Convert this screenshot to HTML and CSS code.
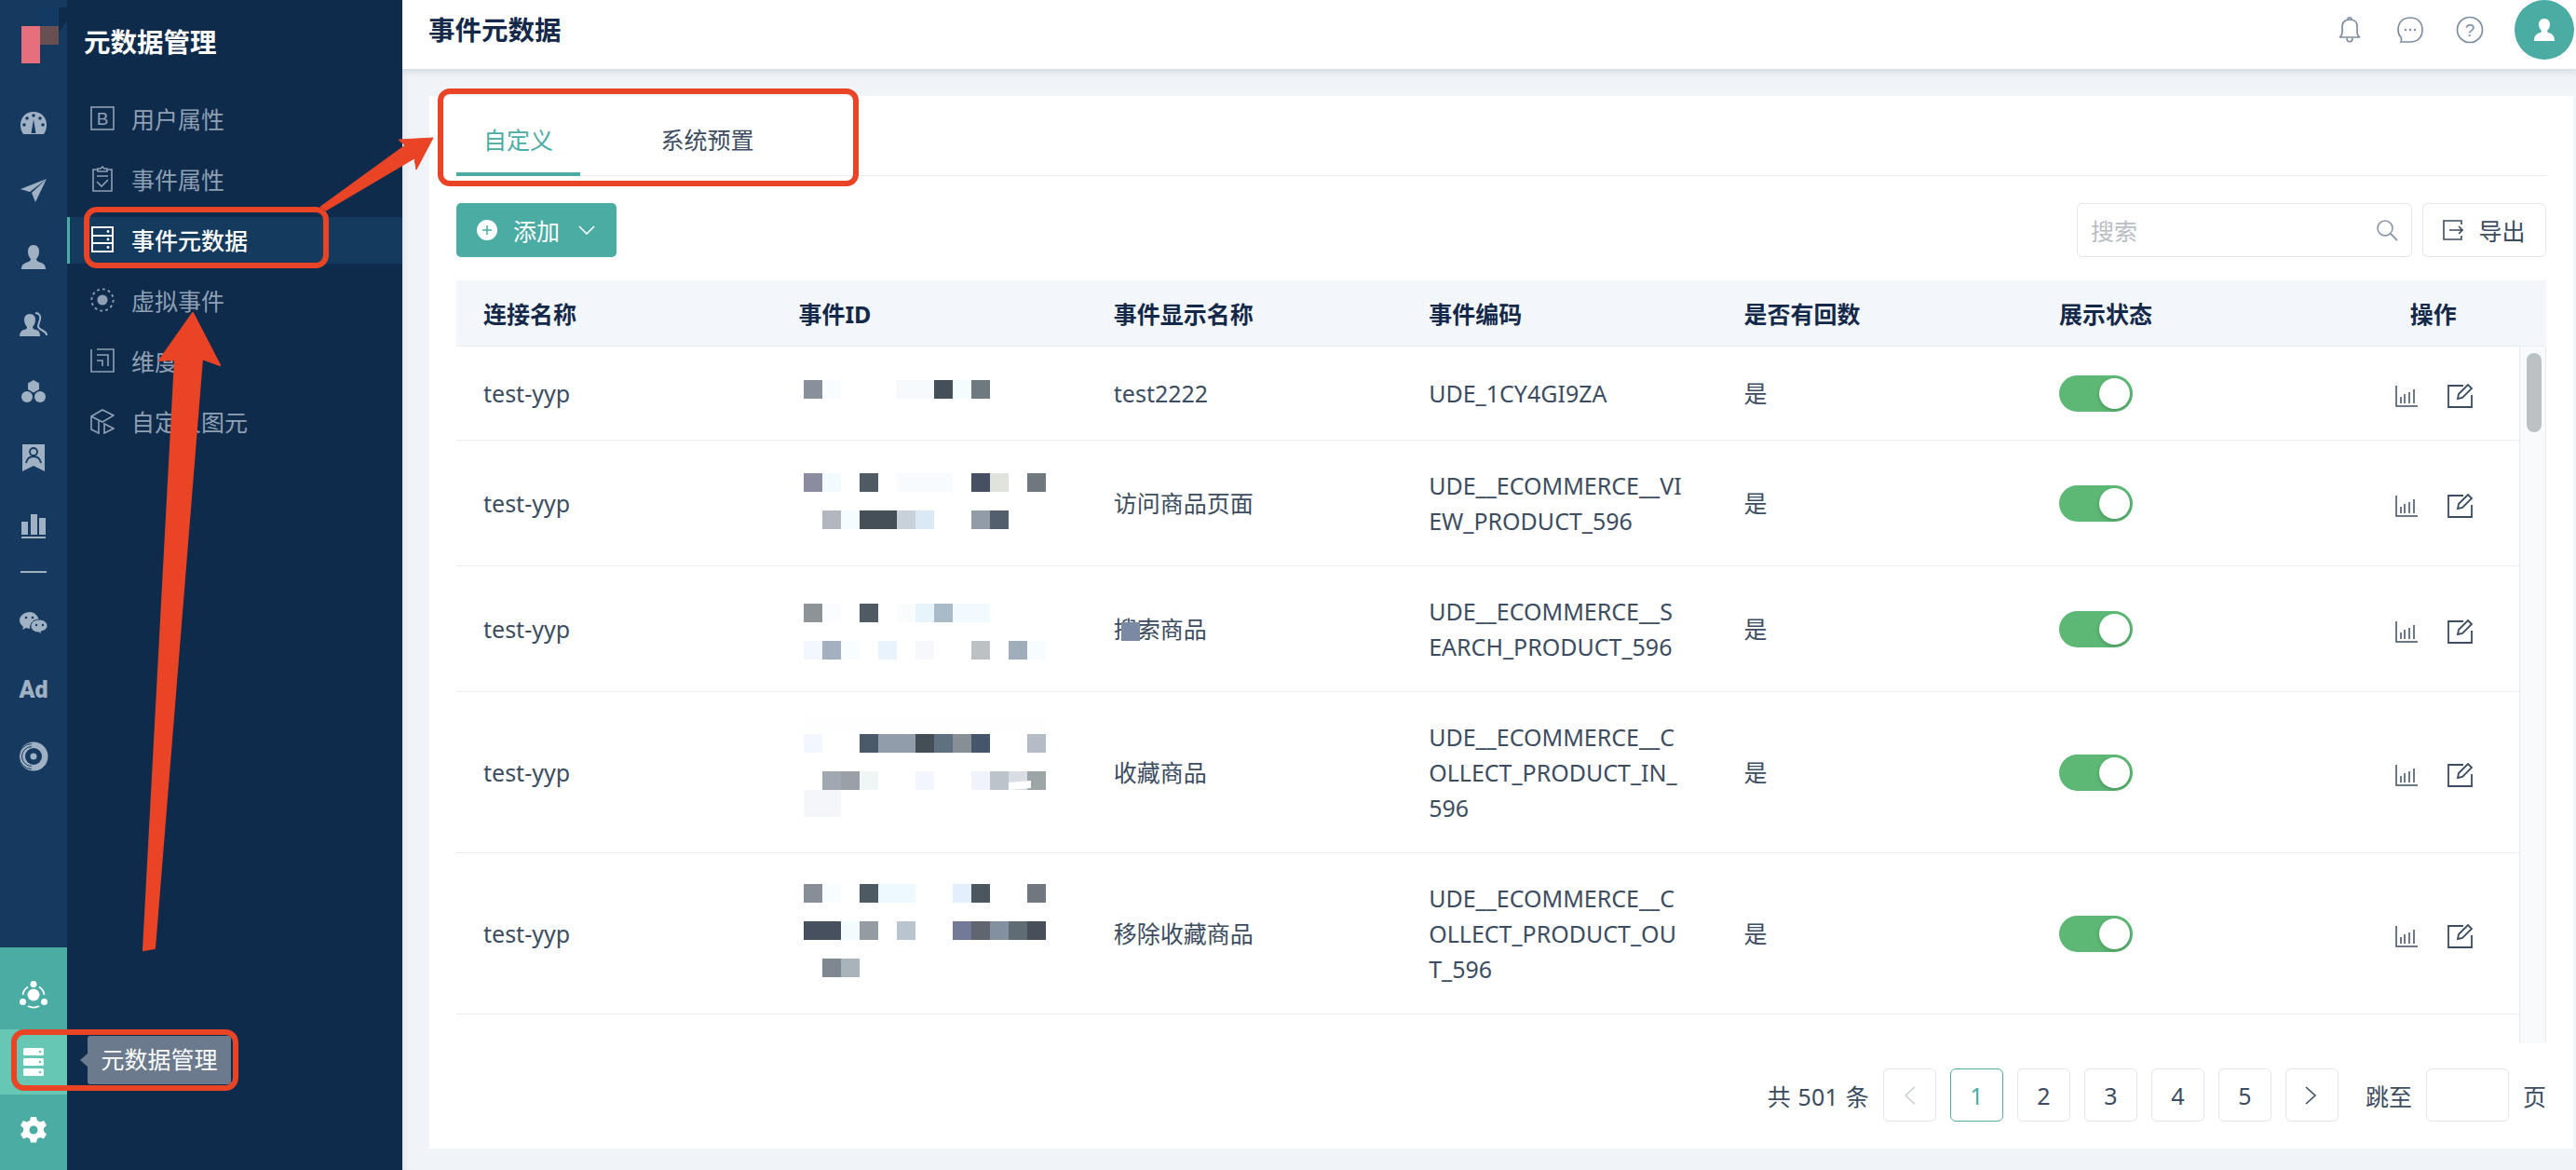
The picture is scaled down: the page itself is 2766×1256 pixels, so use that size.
FILE: index.html
```html
<!DOCTYPE html>
<html lang="zh-CN">
<head>
	<meta charset="UTF-8">
	<title>事件元数据</title>
	<link rel="stylesheet" href="styles.css">
</head>
<body>
<div class="app">
	<!-- icon rail -->
	<div class="rail">
		<div class="logo">
			<svg width="72" height="96" viewBox="0 0 72 96">
				<rect x="43" y="8" width="20" height="20" fill="#123a62"/>
				<path d="M63 8h9v14l-9 13z" fill="#0f2b4c"/>
				<rect x="43" y="28" width="20" height="20" fill="#674f52"/>
				<rect x="23" y="28" width="20" height="40" fill="#e66f7d"/>
			</svg>
		</div>
		<div class="rail-item"><svg width="30" height="26" viewBox="0 0 30 26"><path d="M15 1C7 1 1 7 1 15c0 4 1 7 3 10h22c2-3 3-6 3-10 0-8-6-14-14-14z" fill="#a0b1c3"/><path d="M15 9l2.500 15h-5z" fill="#163a5f"/><g fill="#163a5f"><circle cx="15" cy="5" r="1.800"/><circle cx="8" cy="8" r="1.800"/><circle cx="22" cy="8" r="1.800"/><circle cx="5" cy="15" r="1.800"/><circle cx="25" cy="15" r="1.800"/></g></svg></div>
		<div class="rail-item"><svg width="30" height="27" viewBox="0 0 30 27"><path d="M29 1L1 12l10 3z" fill="#a0b1c3"/><path d="M29 1L13 16l4 10z" fill="#a0b1c3"/></svg></div>
		<div class="rail-item"><svg width="28" height="28" viewBox="0 0 28 28"><path d="M14 1c4 0 6 3 6 7 0 3-1 6-3 8 0 2 2 3 5 4 3 1 5 3 5 7H1c0-4 2-6 5-7 3-1 5-2 5-4-2-2-3-5-3-8 0-4 2-7 6-7z" fill="#a0b1c3"/></svg></div>
		<div class="rail-item"><svg width="30" height="27" viewBox="0 0 30 27"><path d="M11 2c4 0 6 3 6 6 0 3-1 6-3 8 0 2 2 3 4 3 3 1 4 3 4 7H0c0-4 2-6 4-7 3 0 4-1 4-3-2-2-3-5-3-8 0-3 2-6 6-6z" fill="#a0b1c3"/><path d="M17 1c4 0 6 3 5 7-1 3-2 6-2 8 1 2 3 3 5 4 2 1 4 3 4 5" fill="none" stroke="#a0b1c3" stroke-width="2"/></svg></div>
		<div class="rail-item"><svg width="28" height="26" viewBox="0 0 28 26"><g fill="#a0b1c3"><path d="M14 1l6 3.500v6.500l-6 3.500-6-3.500V4.500z"/><circle cx="7" cy="19" r="6"/><circle cx="21" cy="19" r="6"/></g></svg></div>
		<div class="rail-item"><svg width="26" height="30" viewBox="0 0 26 30"><path d="M1 0h24v29l-12-6-12 6z" fill="#a0b1c3"/><circle cx="13" cy="8" r="4" fill="none" stroke="#163a5f" stroke-width="1.800"/><path d="M5 20c1-5 4-7 8-7s7 2 8 7" fill="none" stroke="#163a5f" stroke-width="1.800"/></svg></div>
		<div class="rail-item"><svg width="28" height="27" viewBox="0 0 28 27"><g fill="#a0b1c3"><rect x="1" y="9" width="7" height="14"/><rect x="11" y="1" width="7" height="22"/><rect x="20" y="5" width="7" height="18"/><rect x="1" y="25" width="26" height="2"/></g></svg></div>
		<div class="rail-sep"></div>
		<div class="rail-item"><svg width="30" height="25" viewBox="0 0 30 25"><path d="M11 1C5 1 0 5 0 10c0 3 2 5 4 7l-1 3 4-2c1 0 3 1 4 1 0-5 4-9 9-9h1c-1-5-5-9-10-9z" fill="#a0b1c3"/><path d="M21 9c-5 0-9 3-9 7s4 7 9 7l3 2-1-3c4-1 7-3 7-6 0-4-4-7-9-7z" fill="#a0b1c3" stroke="#163a5f" stroke-width="1"/><g fill="#163a5f"><circle cx="7" cy="7" r="1.300"/><circle cx="14" cy="7" r="1.300"/><circle cx="18" cy="15" r="1.200"/><circle cx="25" cy="15" r="1.200"/></g></svg></div>
		<div class="rail-item rail-ad">Ad</div>
		<div class="rail-item"><svg width="32" height="32" viewBox="0 0 32 32"><circle cx="16" cy="16" r="15.500" fill="#a0b1c3"/><circle cx="16" cy="16" r="9" fill="#163a5f"/><circle cx="16" cy="16" r="3.500" fill="#a0b1c3"/><path d="M14 2.500A13.500 13.500 0 0 0 14 29.500M14 5.500A10.500 10.500 0 0 0 14 26.500" fill="none" stroke="#163a5f" stroke-width="1"/></svg></div>
		<div class="rail-bottom">
			<div class="rail-teal rail-net"><svg width="30" height="30" viewBox="0 0 30 30"><g fill="#fff"><circle cx="15" cy="15" r="6.500"/><circle cx="15" cy="3.500" r="3.500"/><circle cx="3.500" cy="22.500" r="3.500"/><circle cx="26.500" cy="22.500" r="3.500"/></g><g fill="none" stroke="#fff" stroke-width="1.800"><path d="M9 6.500A11.500 11.500 0 0 0 3.500 15M21 6.500A11.500 11.500 0 0 1 26.500 15M9 27a13 13 0 0 0 12 0"/></g></svg></div>
			<div class="rail-teal rail-db"><svg width="24" height="30" viewBox="0 0 24 30"><g fill="#fff"><rect x="1" y="0" width="22" height="8" rx="1.500"/><rect x="1" y="11" width="22" height="8" rx="1.500"/><rect x="1" y="22" width="22" height="8" rx="1.500"/></g><g fill="#66c8b4"><circle cx="19" cy="4" r="1.300"/><circle cx="19" cy="15" r="1.300"/><circle cx="19" cy="26" r="1.300"/></g></svg></div>
			<div class="rail-teal rail-gear"><svg width="30" height="30" viewBox="0 0 30 30"><path d="M12 1h6l1 4 3 1.500 4-1.500 3 5-3 3v3.500l3 3-3 5-4-1.500-3 1.500-1 4h-6l-1-4-3-1.500-4 1.500-3-5 3-3V13l-3-3 3-5 4 1.500 3-1.500z" fill="#fff"/><circle cx="15" cy="15" r="4.500" fill="#4aaca3"/></svg></div>
		</div>
	</div>

	<!-- second level menu -->
	<div class="side">
		<div class="side-title">元数据管理</div>
		<div class="menu">
			<div class="menu-item"><svg width="26" height="26" viewBox="0 0 26 26"><rect x="1" y="1" width="24" height="24" fill="none" stroke="currentColor" stroke-width="1.600"/><text x="13" y="20" font-size="19" text-anchor="middle" fill="currentColor" font-family="Liberation Sans">B</text></svg>用户属性</div>
			<div class="menu-item"><svg width="26" height="28" viewBox="0 0 26 28"><g fill="none" stroke="currentColor" stroke-width="1.600"><path d="M8 4H3v23h20V4h-5"/><path d="M8 6V3h3l2-2 2 2h3v3z"/><path d="M7 11h12M7 17l5 5 7-7"/></g></svg>事件属性</div>
			<div class="menu-item active"><svg width="26" height="28" viewBox="0 0 26 28"><g fill="none" stroke="currentColor" stroke-width="2"><rect x="2" y="1" width="22" height="26"/><path d="M2 10h22M2 18h22"/></g><g fill="currentColor"><circle cx="19" cy="5.500" r="1.400"/><circle cx="19" cy="14" r="1.400"/><circle cx="19" cy="22.500" r="1.400"/></g></svg>事件元数据</div>
			<div class="menu-item"><svg width="28" height="28" viewBox="0 0 28 28"><circle cx="14" cy="14" r="6" fill="currentColor"/><circle cx="14" cy="14" r="12.500" fill="none" stroke="currentColor" stroke-width="2" stroke-dasharray="3 3.500"/></svg>虚拟事件</div>
			<div class="menu-item"><svg width="26" height="26" viewBox="0 0 26 26"><g fill="none" stroke="currentColor" stroke-width="1.600"><path d="M1 1v24h24V1H7"/><path d="M7 7h12v12M7 13h6v6"/></g></svg>维度</div>
			<div class="menu-item"><svg width="26" height="28" viewBox="0 0 26 28"><g fill="none" stroke="currentColor" stroke-width="1.600"><path d="M1 9l12-7 12 6-12 7zM1 9v14l8 4V14M15 17l10 5-10 5z"/></g></svg>自定义图元</div>
		</div>
	</div>

	<div class="main">
		<div class="topbar">
			<div class="page-title">事件元数据</div>
			<div class="top-icons">
				<svg width="24" height="30" viewBox="0 0 24 30"><g fill="none" stroke="#7f8da0" stroke-width="1.700"><path d="M1 23c2-1 3-3 3-6v-6c0-4 3-7 8-7s8 3 8 7v6c0 3 1 5 3 6z"/><path d="M10 4c0-3 4-3 4 0M9 24c0 5 6 5 6 0"/></g></svg>
				<svg class="ic-chat" width="30" height="30" viewBox="0 0 30 30"><path d="M15 2c8 0 13 5 13 13s-5 13-13 13H5c1-2 1-3 0-5-2-2-3-5-3-8C2 7 7 2 15 2z" fill="none" stroke="#7f8da0" stroke-width="1.700"/><g fill="#7f8da0"><circle cx="10" cy="15" r="1.200"/><circle cx="15" cy="15" r="1.200"/><circle cx="20" cy="15" r="1.200"/></g></svg>
				<svg width="30" height="30" viewBox="0 0 30 30"><circle cx="15" cy="15" r="13.500" fill="none" stroke="#7f8da0" stroke-width="1.700"/><text x="15" y="22" font-size="19" text-anchor="middle" fill="#7f8da0" font-family="Liberation Sans">?</text></svg>
				<div class="avatar"><svg width="22" height="24" viewBox="0 0 22 24"><path d="M11 0c4 0 6 3 6 6 0 3-1 5-3 7 0 2 2 2 4 3 2 1 4 3 4 8H0c0-5 2-7 4-8 2-1 4-1 4-3-2-2-3-4-3-7 0-3 2-6 6-6z" fill="#fff"/></svg></div>
			</div>
		</div>

		<div class="card">
			<div class="tabs">
				<div class="tab on">自定义</div>
				<div class="tab">系统预置</div>
			</div>

			<div class="toolbar">
				<div class="btn-add">
					<svg width="22" height="22" viewBox="0 0 22 22"><circle cx="11" cy="11" r="11" fill="#fff"/><path d="M11 6v10M6 11h10" stroke="#4aaca3" stroke-width="1.500"/></svg>
					<span>添加</span>
					<svg width="18" height="10" viewBox="0 0 18 10"><path d="M1 1l8 8 8-8" fill="none" stroke="#fff" stroke-width="1.600"/></svg>
				</div>
				<div class="tool-right">
					<div class="search"><span>搜索</span><svg width="24" height="24" viewBox="0 0 24 24"><circle cx="10" cy="10" r="8" fill="none" stroke="#8a97a6" stroke-width="1.600"/><path d="M16 16l7 7" stroke="#8a97a6" stroke-width="1.800"/></svg></div>
					<div class="btn-export"><svg width="22" height="22" viewBox="0 0 22 22"><g fill="none" stroke="#3c4c61" stroke-width="1.600"><path d="M20 5V1H1v20h19v-4"/><path d="M7 11h14M17 7l4 4-4 4"/></g></svg><span>导出</span></div>
				</div>
			</div>

			<div class="table">
				<div class="thead">
					<div>连接名称</div><div>事件ID</div><div>事件显示名称</div><div>事件编码</div><div>是否有回数</div><div>展示状态</div><div class="c-op">操作</div>
				</div>
				<div class="tbody-wrap">
					<div class="tbody">
						<div class="row">
							<div>test-yyp</div>
							<div class="c-id"><svg width="240" height="28" viewBox="0 0 240 28"><rect x="0" y="0" width="20" height="20" fill="#8a8f9c"/><rect x="20" width="20" height="20" fill="#f8fcfe"/><rect x="100" width="40" height="20" fill="#f7fafc"/><rect x="140" width="20" height="20" fill="#454f5b"/><rect x="160" width="20" height="20" fill="#f5fcfe"/><rect x="180" width="20" height="20" fill="#6f7a80"/></svg></div>
							<div>test2222</div>
							<div>UDE_1CY4GI9ZA</div>
							<div>是</div>
							<div><span class="switch"></span></div>
							<div class="c-op"><span class="ops"><svg class="ic-chart" width="24" height="23" viewBox="0 0 24 23"><path d="M1 0v22h23M6 12v7M10 9v10M15 7v12M20 4v15" fill="none" stroke="#3c4c61" stroke-width="1.500"/></svg><svg class="ic-edit" width="28" height="26" viewBox="0 0 28 26"><g fill="none" stroke="#3c4c61" stroke-width="1.800"><path d="M17 2H1v23h25V12"/><path d="M11 16l1-5L22 1l4 4-10 10z"/></g></svg></span></div>
						</div>
						<div class="row">
							<div>test-yyp</div>
							<div class="c-id"><svg width="280" height="65" viewBox="0 0 280 65"><g><rect x="0" width="20" height="20" fill="#8b8c9f"/><rect x="20" width="20" height="20" fill="#f2fbff"/><rect x="60" width="20" height="20" fill="#505a65"/><rect x="100" width="60" height="20" fill="#f8fbfd"/><rect x="180" width="20" height="20" fill="#474f62"/><rect x="200" width="20" height="20" fill="#e0e2dc"/><rect x="240" width="20" height="20" fill="#6f787e"/></g><g transform="translate(0 40)"><rect x="20" width="20" height="20" fill="#b2b7bf"/><rect x="40" width="20" height="20" fill="#f5fcff"/><rect x="60" width="40" height="20" fill="#454f58"/><rect x="100" width="20" height="20" fill="#c8d1d9"/><rect x="120" width="20" height="20" fill="#dbe8f5"/><rect x="180" width="20" height="20" fill="#929ca9"/><rect x="200" width="20" height="20" fill="#535f6c"/></g></svg></div>
							<div>访问商品页面</div>
							<div>UDE__ECOMMERCE__VI<br>EW_PRODUCT_596</div>
							<div>是</div>
							<div><span class="switch"></span></div>
							<div class="c-op"><span class="ops"><svg class="ic-chart" width="24" height="23" viewBox="0 0 24 23"><path d="M1 0v22h23M6 12v7M10 9v10M15 7v12M20 4v15" fill="none" stroke="#3c4c61" stroke-width="1.500"/></svg><svg class="ic-edit" width="28" height="26" viewBox="0 0 28 26"><g fill="none" stroke="#3c4c61" stroke-width="1.800"><path d="M17 2H1v23h25V12"/><path d="M11 16l1-5L22 1l4 4-10 10z"/></g></svg></span></div>
						</div>
						<div class="row">
							<div>test-yyp</div>
							<div class="c-id"><svg width="280" height="65" viewBox="0 -5 280 65"><g><rect x="0" width="20" height="20" fill="#8d9397"/><rect x="20" width="20" height="20" fill="#fafcff"/><rect x="60" width="20" height="20" fill="#505a64"/><rect x="100" width="20" height="20" fill="#f9fbfd"/><rect x="120" width="20" height="20" fill="#e8f4fc"/><rect x="140" width="20" height="20" fill="#a9bac9"/><rect x="160" width="40" height="20" fill="#f1fbff"/></g><g transform="translate(0 40)"><rect x="0" width="20" height="20" fill="#f3f8ff"/><rect x="20" width="20" height="20" fill="#a4afc0"/><rect x="40" width="20" height="20" fill="#f8fdff"/><rect x="80" width="20" height="20" fill="#e9f3fd"/><rect x="120" width="20" height="20" fill="#f6f8fb"/><rect x="180" width="20" height="20" fill="#bcc2c4"/><rect x="220" width="20" height="20" fill="#a0adbb"/><rect x="240" width="20" height="20" fill="#f6fcff"/></g></svg></div>
							<div><span class="blot">搜索商品</span></div>
							<div>UDE__ECOMMERCE__S<br>EARCH_PRODUCT_596</div>
							<div>是</div>
							<div><span class="switch"></span></div>
							<div class="c-op"><span class="ops"><svg class="ic-chart" width="24" height="23" viewBox="0 0 24 23"><path d="M1 0v22h23M6 12v7M10 9v10M15 7v12M20 4v15" fill="none" stroke="#3c4c61" stroke-width="1.500"/></svg><svg class="ic-edit" width="28" height="26" viewBox="0 0 28 26"><g fill="none" stroke="#3c4c61" stroke-width="1.800"><path d="M17 2H1v23h25V12"/><path d="M11 16l1-5L22 1l4 4-10 10z"/></g></svg></span></div>
						</div>
						<div class="row">
							<div>test-yyp</div>
							<div class="c-id"><svg width="280" height="122" viewBox="0 0 280 122"><rect x="0" width="260" height="20" fill="#fdfefd"/><g transform="translate(0 20)"><rect x="0" width="20" height="20" fill="#f2f6fd"/><rect x="60" width="20" height="20" fill="#4b5a6b"/><rect x="80" width="40" height="20" fill="#919daa"/><rect x="120" width="20" height="20" fill="#434e57"/><rect x="140" width="20" height="20" fill="#5f7081"/><rect x="160" width="20" height="20" fill="#868e96"/><rect x="180" width="20" height="20" fill="#45566b"/><rect x="240" width="20" height="20" fill="#b3bcc7"/></g><g transform="translate(0 60)"><rect x="20" width="20" height="20" fill="#a0a8b1"/><rect x="40" width="20" height="20" fill="#9a9fa8"/><rect x="60" width="20" height="20" fill="#f0f5f6"/><rect x="120" width="20" height="20" fill="#f3f6fd"/><rect x="180" width="20" height="20" fill="#f0f3f9"/><rect x="200" width="20" height="20" fill="#bcc4cb"/><rect x="220" width="20" height="20" fill="#d8dde3"/><rect x="240" width="20" height="20" fill="#9ca6a6"/><path d="M220 12l24-2v8l-24 2z" fill="#fff"/></g><rect x="0" y="80" width="40" height="29" fill="#f4f6fa"/></svg></div>
							<div>收藏商品</div>
							<div>UDE__ECOMMERCE__C<br>OLLECT_PRODUCT_IN_<br>596</div>
							<div>是</div>
							<div><span class="switch"></span></div>
							<div class="c-op"><span class="ops"><svg class="ic-chart" width="24" height="23" viewBox="0 0 24 23"><path d="M1 0v22h23M6 12v7M10 9v10M15 7v12M20 4v15" fill="none" stroke="#3c4c61" stroke-width="1.500"/></svg><svg class="ic-edit" width="28" height="26" viewBox="0 0 28 26"><g fill="none" stroke="#3c4c61" stroke-width="1.800"><path d="M17 2H1v23h25V12"/><path d="M11 16l1-5L22 1l4 4-10 10z"/></g></svg></span></div>
						</div>
						<div class="row">
							<div>test-yyp</div>
							<div class="c-id"><svg width="280" height="107" viewBox="0 0 280 107"><g><rect x="0" width="20" height="20" fill="#878e98"/><rect x="20" width="20" height="20" fill="#f6fcff"/><rect x="60" width="20" height="20" fill="#4e5a63"/><rect x="80" width="40" height="20" fill="#eef8ff"/><rect x="160" width="20" height="20" fill="#e3effd"/><rect x="180" width="20" height="20" fill="#4b565f"/><rect x="240" width="20" height="20" fill="#70777e"/></g><g transform="translate(0 40)"><rect x="0" width="40" height="20" fill="#47505e"/><rect x="40" width="20" height="20" fill="#f2fcfe"/><rect x="60" width="20" height="20" fill="#959ba3"/><rect x="100" width="20" height="20" fill="#b9c4d0"/><rect x="160" width="20" height="20" fill="#737a97"/><rect x="180" width="20" height="20" fill="#60656f"/><rect x="200" width="20" height="20" fill="#82909f"/><rect x="220" width="20" height="20" fill="#5f6c74"/><rect x="240" width="20" height="20" fill="#464f5a"/></g><g transform="translate(0 80)"><rect x="20" width="20" height="20" fill="#7f8790"/><rect x="40" width="20" height="20" fill="#a8b3ba"/></g></svg></div>
							<div>移除收藏商品</div>
							<div>UDE__ECOMMERCE__C<br>OLLECT_PRODUCT_OU<br>T_596</div>
							<div>是</div>
							<div><span class="switch"></span></div>
							<div class="c-op"><span class="ops"><svg class="ic-chart" width="24" height="23" viewBox="0 0 24 23"><path d="M1 0v22h23M6 12v7M10 9v10M15 7v12M20 4v15" fill="none" stroke="#3c4c61" stroke-width="1.500"/></svg><svg class="ic-edit" width="28" height="26" viewBox="0 0 28 26"><g fill="none" stroke="#3c4c61" stroke-width="1.800"><path d="M17 2H1v23h25V12"/><path d="M11 16l1-5L22 1l4 4-10 10z"/></g></svg></span></div>
						</div>
					</div>
					<div class="scroll"><div class="thumb"></div></div>
				</div>
			</div>

			<div class="pager">
				<span class="total">共 501 条</span>
				<span class="pg off"><svg width="14" height="20" viewBox="0 0 14 20"><path d="M13 1L3 10l10 9" fill="none" stroke="#c9ced4" stroke-width="1.600"/></svg></span>
				<span class="pg cur">1</span>
				<span class="pg">2</span>
				<span class="pg">3</span>
				<span class="pg">4</span>
				<span class="pg">5</span>
				<span class="pg"><svg width="14" height="20" viewBox="0 0 14 20"><path d="M1 1l10 9-10 9" fill="none" stroke="#3c4c61" stroke-width="1.600"/></svg></span>
				<span class="jump">跳至</span>
				<span class="pg-input"></span>
				<span class="unit">页</span>
			</div>
		</div>
	</div>
</div>

<!-- tooltip -->
<div class="tip">元数据管理</div>

<!-- red marks drawn on top of the screenshot -->
<svg class="marks" width="2766" height="1256" viewBox="0 0 2766 1256">
	<g fill="none" stroke="#e84425" stroke-width="6">
		<rect x="93" y="225" width="257" height="60" rx="11"/>
		<rect x="15" y="1108" width="238" height="60" rx="11"/>
		<rect x="473" y="98" width="446" height="99" rx="10"/>
	</g>
	<g fill="#e84425" stroke="#e84425" stroke-linejoin="round">
		<path d="M207 336L236 392L217 385L166 1018L154 1020L188 386L171 387Z" stroke-width="2"/>
		<path d="M465 148L447 182L445 170L350 226L344 222L435 156L428 150Z" stroke-width="1"/>
	</g>
</svg>
</body>
</html>
```

FILE: styles.css
```css
*{
	margin: 0;
	padding: 0;
	box-sizing: border-box;
}
html, body{
	width: 2766px;
	height: 1256px;
	overflow: hidden;
}
body{
	font-family: "Noto Sans", "Noto Sans CJK SC", sans-serif;
	font-size: 25px;
	color: #3c4c61;
	background-color: #f0f4f8;
	position: relative;
}
svg{
	display: block;
	flex: none;
}
.app{
	display: flex;
	height: 1256px;
}

/* rail */
.rail{
	width: 72px;
	background-color: #163a5f;
	display: flex;
	flex-direction: column;
}
.logo{
	height: 96px;
}
.rail-item{
	height: 72px;
	display: flex;
	align-items: center;
	justify-content: center;
}
.rail-sep{
	height: 2px;
	width: 28px;
	margin: 13px 0 17px 22px;
	background-color: #a0b1c3;
}
.rail-ad{
	color: #a0b1c3;
	font-family: "Roboto", sans-serif;
	font-weight: 900;
	font-size: 25px;
}
.rail-bottom{
	margin-top: auto;
	background-color: #4aaca3;
}
.rail-teal{
	display: flex;
	justify-content: center;
	align-items: center;
}
.rail-net{
	height: 88px;
	padding-top: 13px;
}
.rail-db{
	height: 70px;
	background-color: #66c8b4;
}
.rail-gear{
	height: 81px;
	padding-bottom: 6px;
}

/* second level menu */
.side{
	width: 360px;
	background-color: #0f2b4c;
}
.side-title{
	height: 96px;
	padding: 24px 0 0 18px;
	color: #fff;
	font-size: 28.5px;
	font-weight: 700;
	line-height: 42px;
}
.menu{
	margin-top: 7px;
}
.menu-item{
	height: 50px;
	margin-bottom: 15px;
	display: flex;
	align-items: center;
	gap: 18px;
	padding-left: 25px;
	color: #8fa0b3;
	padding-bottom: 2px;
}
.menu-item svg{
	width: 26px;
}
.menu-item.active{
	background-color: #143a5e;
	border-left: 3px solid #4aaca3;
	padding-left: 22px;
	color: #fff;
	font-weight: 500;
}

/* main */
.main{
	flex: 1;
	display: flex;
	flex-direction: column;
	min-width: 0;
	box-shadow: inset 6px 0 8px -6px rgba(30, 50, 80, 0.12);
}
.topbar{
	height: 74px;
	background-color: #fff;
	box-shadow: 0 2px 8px rgba(40, 60, 90, 0.18);
	display: flex;
	align-items: flex-start;
	justify-content: space-between;
	padding-left: 28px;
	position: relative;
}
.page-title{
	font-size: 28.5px;
	font-weight: 700;
	line-height: 64px;
	color: #14294a;
}
.top-icons{
	display: flex;
	align-items: center;
	height: 64px;
	padding-right: 2px;
	gap: 34px;
}
.ic-chat{
	margin-left: 4px;
}
.avatar{
	width: 64px;
	height: 64px;
	margin-left: -1px;
	border-radius: 50%;
	background-color: #4aaca3;
	display: flex;
	align-items: center;
	justify-content: center;
}

/* card */
.card{
	flex: 1;
	margin: 29px 3px 23px 29px;
	padding: 0 29px;
	background-color: #fff;
	display: flex;
	flex-direction: column;
}
.tabs{
	height: 86px;
	border-bottom: 1px solid #e8edf2;
	display: flex;
}
.tab{
	height: 86px;
	width: 133px;
	display: flex;
	align-items: center;
	justify-content: center;
	padding-top: 6px;
}
.tab + .tab{
	margin-left: 70px;
}
.tab.on{
	color: #4aaca3;
	border-bottom: 4px solid #4aaca3;
	padding-top: 10px;
}
.toolbar{
	margin-top: 29px;
	height: 58px;
	display: flex;
	justify-content: space-between;
}
.btn-add{
	width: 172px;
	background-color: #4aaca3;
	border-radius: 5px;
	color: #fff;
	display: flex;
	align-items: center;
	padding-left: 22px;
	gap: 17px;
}
.btn-add svg:last-child{
	margin-left: 3px;
}
.tool-right{
	display: flex;
	gap: 11px;
}
.search{
	width: 360px;
	border: 1.5px solid #dfe6ec;
	border-radius: 6px;
	display: flex;
	align-items: center;
	justify-content: space-between;
	padding: 0 14px;
	color: #b9bec4;
}
.btn-export{
	width: 133px;
	border: 1.5px solid #dfe6ec;
	border-radius: 6px;
	display: flex;
	align-items: center;
	justify-content: center;
	gap: 16px;
}

/* table */
.table{
	margin-top: 25px;
}
.thead, .row{
	display: grid;
	grid-template-columns: repeat(6, 338.4px) 1fr;
	align-items: center;
}
.thead{
	height: 71px;
	background-color: #f3f7fb;
	border-bottom: 1px solid #e8edf2;
	padding-right: 29px;
	font-weight: 700;
	color: #14294a;
}
.thead > div, .row > div{
	padding-left: 29px;
}
.thead > .c-op, .row > .c-op{
	padding-left: 0;
	text-align: center;
}
.tbody-wrap{
	display: flex;
	height: 748px;
}
.tbody{
	flex: 1;
	min-width: 0;
	overflow: hidden;
}
.row{
	min-height: 101px;
	padding: 29px 0;
	line-height: 38px;
	border-bottom: 1px solid #e9eef3;
}
.row > .c-id{
	height: 38px;
	padding-left: 35px;
	display: flex;
	align-items: center;
}
.blot{
	position: relative;
	display: inline-block;
}
.blot::after{
	content: "";
	position: absolute;
	left: 8px;
	top: 12px;
	width: 20px;
	height: 20px;
	background-color: #7b89a3;
}
.switch{
	display: block;
	width: 79px;
	height: 39px;
	border-radius: 20px;
	background-color: #5cb874;
	position: relative;
}
.switch::after{
	content: "";
	position: absolute;
	right: 3px;
	top: 3px;
	width: 33px;
	height: 33px;
	border-radius: 50%;
	background-color: #fff;
	box-shadow: 0 2px 4px rgba(0, 0, 0, 0.2);
}
.ops{
	display: inline-flex;
	align-items: center;
	gap: 32px;
	margin-left: 3px;
	vertical-align: middle;
}
.scroll{
	width: 29px;
	background-color: #f8fafb;
	border-left: 1px solid #e6ebef;
	border-right: 1px solid #e6ebef;
	padding: 7px 4px 0 7px;
}
.thumb{
	height: 85px;
	border-radius: 8px;
	background-color: #bcc2c4;
}

/* pager */
.pager{
	margin-top: 27px;
	display: flex;
	align-items: center;
	justify-content: flex-end;
	height: 57px;
}
.total{
	word-spacing: 1px;
	letter-spacing: 0.2px;
}
.pg{
	width: 57px;
	height: 57px;
	margin-left: 15px;
	border: 1.5px solid #dfe6ec;
	border-radius: 6px;
	display: flex;
	align-items: center;
	justify-content: center;
}
.pg.cur{
	color: #4aaca3;
	border-color: #4aaca3;
}
.jump{
	margin-left: 29px;
}
.pg-input{
	width: 89px;
	height: 57px;
	margin: 0 15px;
	border: 1.5px solid #dfe6ec;
	border-radius: 6px;
}

/* overlays */
.tip{
	position: absolute;
	left: 94px;
	top: 1112px;
	width: 154px;
	height: 52px;
	background-color: #6b7a8d;
	color: #fff;
	font-size: 25px;
	line-height: 50px;
	text-align: center;
	border-radius: 3px;
}
.tip::before{
	content: "";
	position: absolute;
	left: -8px;
	top: 19px;
	border: 7px solid transparent;
	border-left: 0;
	border-right: 8px solid #6b7a8d;
}
.marks{
	position: absolute;
	left: 0;
	top: 0;
}
```
